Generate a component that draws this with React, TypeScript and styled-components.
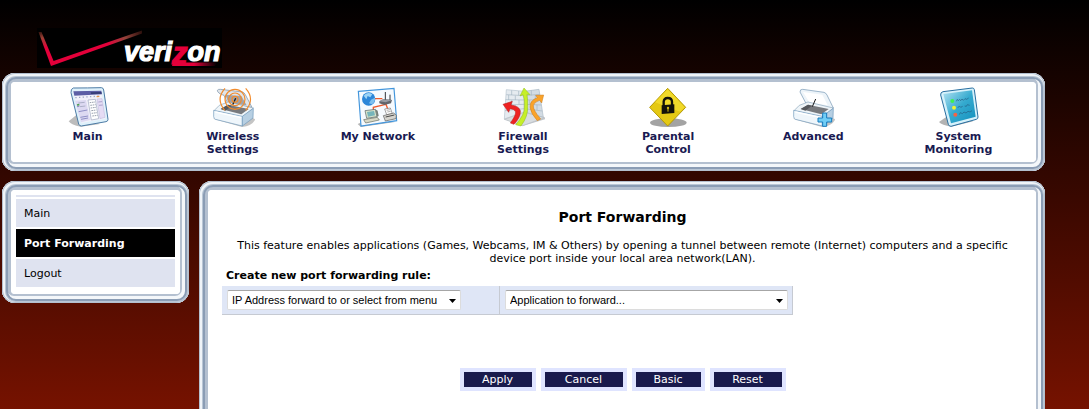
import React from 'react';
import styled, { createGlobalStyle } from 'styled-components';

const GlobalStyle = createGlobalStyle`
  *, *::before, *::after { box-sizing: border-box; }
  html { min-height: 100%; background: #000; scrollbar-width: none; }
  body {
    margin: 0;
    min-height: 100vh;
    font-family: Verdana, 'DejaVu Sans', sans-serif;
    font-size: 11px;
    line-height: 13px;
    color: #000;
    background: linear-gradient(#000 0, #3a0800 200px, #761200 409px);
  }
`;

const Page = styled.div`
  padding: 28px 44px 0 2px;
  display: flex;
  flex-direction: column;
`;

const Brand = styled.header`
  padding-left: 35px;
  height: 45px;
  svg { display: block; overflow: visible; }
`;

const Panel = styled.div`
  padding: 9px;
  border-radius: 13px;
  background: #fff;
  box-shadow:
    inset 0 0 0 1px #b3bfce,
    inset 1px 1px 0 2px #f0f4f8,
    inset 1px 1px 0 3px #b9c6d5,
    inset 1px 1px 0 5px #8b9db5,
    inset -1px -1px 0 6px #f4f7fa,
    inset 0 0 0 9px #b4c0d0;
`;

const PanelBody = styled.div`
  border-radius: 4px;
  background: #fff;
`;

const NavBody = styled(PanelBody)`
  display: grid;
  grid-template-columns: repeat(7, 1fr);
  min-height: 80px;
  padding: 5px 5px 0 4px;
`;

const NavLink = styled.a`
  display: flex;
  flex-direction: column;
  align-items: center;
  gap: 3px;
  color: #191a52;
  font-weight: bold;
  text-align: center;
  text-decoration: none;
`;

const NavLabel = styled.span`
  max-width: 90px;
`;

const Columns = styled.div`
  display: grid;
  grid-template-columns: 187px 1fr;
  gap: 10px;
  align-items: start;
  margin-top: 10px;
`;

const SideBody = styled(PanelBody)`
  display: flex;
  flex-direction: column;
  gap: 2px;
  padding: 5px 5px 7px;
`;

const SideRule = styled.div`
  height: 2px;
  background: #dfe3f0;
`;

const SideLink = styled.a<{ $active?: boolean }>`
  height: 28px;
  padding: 1px 8px 0;
  line-height: 28px;
  text-decoration: none;
  color: ${(p) => (p.$active ? '#fff' : '#000')};
  background: ${(p) => (p.$active ? '#000' : '#dfe3f0')};
  font-weight: ${(p) => (p.$active ? 'bold' : 'normal')};
`;

const MainBody = styled(PanelBody)`
  padding: 18px 13px 40px 14px;
`;

const Title = styled.h1`
  margin: 0 0 13px;
  font-size: 14px;
  line-height: 18px;
  text-align: center;
`;

const Intro = styled.p`
  margin: 0;
  text-align: center;
`;

const RuleHeading = styled.h2`
  margin: 4px 0;
  padding-left: 4px;
  font-size: 11px;
  line-height: 13px;
`;

const FieldRow = styled.div`
  display: flex;
`;

const Field = styled.div<{ $width: number }>`
  width: ${(p) => p.$width}px;
  padding: 4px;
  padding-left: 5px;
  background: #dfe6f6;
  border-right: 1px solid #c6cad2;
  border-bottom: 1px solid #c6cad2;
`;

const SelectWrap = styled.div<{ $width: number }>`
  position: relative;
  width: ${(p) => p.$width}px;
  svg {
    position: absolute;
    right: 5px;
    top: 9px;
    pointer-events: none;
  }
`;

const Select = styled.select`
  appearance: none;
  display: block;
  width: 100%;
  height: 20px;
  margin: 0;
  padding: 0 16px 0 4px;
  border: 1px solid #dcdcdc;
  border-top-color: #a6a6a6;
  border-radius: 2px;
  background: #fff;
  color: #000;
  font: 11px 'Liberation Sans', Arial, sans-serif;
`;

const Actions = styled.div`
  display: flex;
  justify-content: center;
  gap: 5px;
  margin-top: 53px;
`;

const ActionButton = styled.button<{ $width: number }>`
  width: ${(p) => p.$width}px;
  height: 23px;
  padding: 0;
  border: 4px solid #dfe4ff;
  background: #191a4c;
  color: #fff;
  font: inherit;
  line-height: 15px;
`;

function Logo() {
  return (
    <svg width="185" height="40" viewBox="37 28 185 40" role="img" aria-label="verizon">
      <defs>
        <linearGradient id="tickLeft" gradientUnits="userSpaceOnUse" x1="40" y1="31" x2="46" y2="48">
          <stop offset="0" stopColor="#2c100c" />
          <stop offset="0.4" stopColor="#9c4034" />
          <stop offset="1" stopColor="#e4003a" />
        </linearGradient>
        <linearGradient id="tickRight" gradientUnits="userSpaceOnUse" x1="142" y1="32" x2="108" y2="44">
          <stop offset="0" stopColor="#2c100c" />
          <stop offset="0.5" stopColor="#93423a" />
          <stop offset="1" stopColor="#e4003a" />
        </linearGradient>
        <linearGradient id="zTail" gradientUnits="userSpaceOnUse" x1="194" y1="0" x2="217" y2="0">
          <stop offset="0" stopColor="#e4003a" />
          <stop offset="1" stopColor="#000" />
        </linearGradient>
      </defs>
      <rect x="37" y="28" width="185" height="40" fill="#000" />
      <path d="M38.500 32L41.500 32L54 62L51 66Z" fill="url(#tickLeft)" />
      <path d="M142 30.500L52 61.500L51 66L142 33.500Z" fill="url(#tickRight)" />
      <path d="M173 62.500H217L215 66H172Z" fill="url(#zTail)" />
      <text
        x="124"
        y="61"
        fill="#fff"
        stroke="#fff"
        strokeWidth="1.2"
        fontFamily="'Liberation Sans', Arial, sans-serif"
        fontSize="27"
        fontWeight="bold"
        fontStyle="italic"
      >
        veri<tspan fill="#e4003a" stroke="#e4003a" fontSize="31" dy="3">z</tspan><tspan dy="-3">on</tspan>
      </text>
    </svg>
  );
}

function Icon({ viewBox, children }: { viewBox: string; children: React.ReactNode }) {
  return (
    <svg width="44" height="40" viewBox={viewBox} aria-hidden="true">
      {children}
    </svg>
  );
}

function MainIcon() {
  return (
    <Icon viewBox="18 21 132 120">
      <path d="M26 124L50 104L120 132L62 140Q34 136 26 124Z" fill="#bcbcbc" />
      <path d="M40 24Q84 24 124 23Q130 23 131 30L144 118Q144 124 138 125L64 138Q58 138 56 132L33 38Q32 26 40 24Z" fill="#dff1fb" stroke="#4c7ba5" strokeWidth="3" />
      <path d="M40 35L124 33L137 116L64 129Z" fill="#f2f2fa" />
      <path d="M40 34L124 32L126 43L43 47Z" fill="#5c5fa5" />
      <path d="M92 37L124 36L125 41L93 42Z" fill="#343c76" />
      <path d="M46 53L122 48" stroke="#9aa6c4" strokeWidth="4" strokeDasharray="4 7" />
      <path d="M110 50L118 49" stroke="#e79948" strokeWidth="4" />
      <path d="M45 62L78 60L90 120L63 127Z" fill="#ddd9f2" />
      <path d="M84 60L106 58L116 116L94 120Z" fill="#fff" stroke="#9ba4be" strokeWidth="2" />
      <path d="M111 57L126 56L135 112L120 116Z" fill="#e5dcf4" stroke="#b8b2d8" strokeWidth="1.500" />
      <path d="M89 68L105 66M91 76L107 74M92 84L108 82M94 92L109 90M95 100L111 98M97 108L113 106" stroke="#9aa2af" strokeWidth="3" strokeDasharray="5 2" />
      <path d="M51 80L58 79M56 95L82 90M61 112L84 108M63 118L84 114" stroke="#8f8fc6" strokeWidth="3" />
      <path d="M51 75L58 74" stroke="#4c9e50" strokeWidth="5" />
      <path d="M55 69L74 67M60 80L76 78" stroke="#9298b0" strokeWidth="2" />
      <path d="M115 66L126 65M117 76L128 75" stroke="#aaa3cc" strokeWidth="3" />
    </Icon>
  );
}

function RouterBox() {
  return (
    <>
      <path d="M38 116L126 141Q156 138 166 118L150 108Z" fill="#c4c4c4" />
      <path d="M58 76L84 66L160 84L127 111L42 92Z" fill="#eef4f8" stroke="#8aa4ba" strokeWidth="2" />
      <path d="M62 87L84 74L146 87L124 103Z" fill="#77797d" />
      <path d="M62 87L84 74L96 77L76 92Z" fill="#55585d" />
      <path d="M41 91L127 109L127 138L46 118Q42 116 41 110Z" fill="#eff6fb" stroke="#6f98bb" strokeWidth="2" />
      <path d="M127 109L160 85L159 114L127 138Z" fill="#b7cfe2" stroke="#6f98bb" strokeWidth="2" />
      <path d="M46 96L124 113" stroke="#fff" strokeWidth="4" />
    </>
  );
}

function WirelessIcon() {
  return (
    <Icon viewBox="33 21 132 120">
      <path d="M52 31Q54 27 62 28L128 36Q133 38 136 44L156 82L84 72L72 46Q52 40 52 31Z" fill="#e1e5e9" stroke="#728ca6" strokeWidth="2" />
      <path d="M76 44L124 48L140 76L86 70Z" fill="#a3a4a8" />
      <RouterBox />
      <path d="M98 74L107 55" stroke="#1a1a1a" strokeWidth="4" />
      <g fill="none" stroke="#f28b2c" strokeWidth="3.500">
        <circle cx="105" cy="58" r="9" />
        <circle cx="105" cy="58" r="19" />
        <circle cx="105" cy="58" r="30" />
        <path d="M75 25Q46 57 74 91M137 25Q166 57 137 91" />
      </g>
    </Icon>
  );
}

function AdvancedIcon() {
  return (
    <Icon viewBox="33 21 132 120">
      <path d="M80 74L60 36Q60 27 68 28L132 37Q138 39 141 45L160 84L142 88Z" fill="#edf4f9" stroke="#6f92b0" strokeWidth="2" />
      <path d="M69 36L127 44L143 76L89 68Z" fill="#fff" />
      <RouterBox />
      <path d="M97 80L107 57" stroke="#161616" strokeWidth="3" />
      <path d="M128 99H140V114H155V126H140V139H128V126H114V114H128Z" fill="#70cdf5" stroke="#177abc" strokeWidth="3" />
    </Icon>
  );
}

function NetworkIcon() {
  return (
    <Icon viewBox="33 21 132 120">
      <path d="M38 132L60 122L150 126L48 141Z" fill="#b5b5b5" />
      <path d="M40 34L147 25L155 122L48 138Z" fill="#f6fafe" stroke="#4396dc" strokeWidth="3.500" />
      <path d="M88 56H112M122 73L85 82V92M122 70L130 92" fill="none" stroke="#ee5a2b" strokeWidth="4" />
      <circle cx="71" cy="57" r="20" fill="#2c86d8" />
      <path d="M56 47Q66 34 82 43L76 52L68 48L64 58Z" fill="#9bd3f6" />
      <path d="M78 59L90 53Q91 65 81 73L72 70Z" fill="#7fc0ee" />
      <path d="M103 64L116 57L141 60L138 70L118 75L103 70Z" fill="#62666c" />
      <path d="M103 64L116 57L141 60L122 67Z" fill="#989ca3" />
      <path d="M121 59V36M135 60V44" stroke="#33363a" strokeWidth="3" />
      <path d="M60 92L91 88L96 110L65 115Z" fill="#d7e2ca" stroke="#505e61" strokeWidth="2" />
      <path d="M66 96L87 93L90 106L69 110Z" fill="#75b5ba" />
      <path d="M91 88L98 92L101 108L96 110Z" fill="#778179" />
      <path d="M56 119L97 112L103 120L62 129Z" fill="#d8d9c7" stroke="#64695e" strokeWidth="2" />
      <path d="M119 87L136 84L142 101L125 104Z" fill="#fff" stroke="#777" strokeWidth="2" />
      <path d="M115 107L146 99L154 106L153 116L121 123Z" fill="#d6d5cf" stroke="#585858" strokeWidth="2" />
      <path d="M122 111L148 105" stroke="#4a4a4a" strokeWidth="3" />
      <path d="M125 91L135 89M127 96L137 94" stroke="#888" strokeWidth="2" />
    </Icon>
  );
}

function FirewallIcon() {
  return (
    <Icon viewBox="33 21 132 120">
      <path d="M43 118L98 138L170 116L140 100Z" fill="#c2c6ca" />
      <path d="M49 29L103 34V96L43 117Z" fill="#e6ebf0" stroke="#b7c4ce" strokeWidth="2" />
      <path d="M103 34L147 28L160 112L103 96Z" fill="#d3dce4" stroke="#aab9c6" strokeWidth="2" />
      <path d="M49 44L103 47M47 59L103 60M46 75L103 73M45 92L103 86M65 31V45M86 33V46M56 45V60M76 47V60M65 60V76M87 60V73M76 75L75 90M103 47L149 43M103 60L152 59M103 73L154 75M103 86L157 93M124 31V46M136 45V60M119 60V74M141 74V90" fill="none" stroke="#a4b5c3" strokeWidth="2" />
      <path d="M43 118L103 97L163 113L98 137Z" fill="#d9dde0" stroke="#b7bec4" strokeWidth="2" />
      <path d="M39 73L67 64L63 75Q87 78 91 92Q93 110 72 133L61 129Q80 103 76 94Q72 87 60 86L56 97Z" fill="#ee2222" stroke="#b01c1c" strokeWidth="1.500" />
      <path d="M161 45L137 46L142 53Q119 61 120 82Q123 102 142 122L152 117Q129 90 130 77Q132 66 149 61L155 69Z" fill="#faa32a" stroke="#c97a1c" strokeWidth="1.500" />
      <path d="M102 24L120 44L111 43Q114 63 113 80Q115 108 93 138L77 134Q105 103 103 82Q105 59 99 44L90 48Z" fill="#c6ef28" stroke="#8fba1c" strokeWidth="1.500" />
    </Icon>
  );
}

function ParentalIcon() {
  return (
    <Icon viewBox="30 21 132 120">
      <ellipse cx="97" cy="128" rx="55" ry="13" fill="#a3a3a3" />
      <path d="M95 25L149 82L95 138L41 82Z" fill="#e5c914" stroke="#b49904" strokeWidth="3" />
      <path d="M95 28L146 82L132 95L57 67Z" fill="#f1d92a" />
      <path d="M83 78V65Q84 54 95 54Q108 54 108 66V76" fill="none" stroke="#15130a" strokeWidth="7" />
      <path d="M77 76L115 73V99L77 102Z" fill="#15130a" />
      <circle cx="96" cy="84" r="3.500" fill="#d7bc15" />
      <path d="M96 85V95" stroke="#d7bc15" strokeWidth="3" />
    </Icon>
  );
}

function MonitorIcon() {
  return (
    <Icon viewBox="48 51 132 120">
      <defs>
        <linearGradient id="screen" x1="0" y1="0" x2="1" y2="1">
          <stop offset="0" stopColor="#b2e2f2" />
          <stop offset="0.5" stopColor="#35aacf" />
          <stop offset="1" stopColor="#128fbd" />
        </linearGradient>
      </defs>
      <path d="M57 156L82 139L160 154L94 170Q65 166 57 156Z" fill="#b3b3b3" />
      <path d="M69 65L157 54Q162 54 163 59L174 141Q174 147 169 148L93 169Q87 169 85 163L62 75Q61 67 69 65Z" fill="#d5f1fb" stroke="#286fa1" strokeWidth="3" />
      <path d="M70 72L156 61L167 140L93 160Z" fill="url(#screen)" />
      <circle cx="97" cy="93" r="6" fill="#3df052" />
      <circle cx="102" cy="113" r="6" fill="#f0f432" />
      <circle cx="106" cy="134" r="6" fill="#f36445" />
      <path d="M109 94L112 88L115 92L119 88L122 92L126 87L130 91L135 86L140 88L146 84M113 114L118 108L122 112L128 109M134 108L139 109L142 104L149 106M118 134L121 128L127 131L132 126L138 129L144 124L150 126L156 122" fill="none" stroke="#245e85" strokeWidth="2" />
    </Icon>
  );
}

const navItems = [
  { label: 'Main', icon: <MainIcon /> },
  { label: 'Wireless Settings', icon: <WirelessIcon /> },
  { label: 'My Network', icon: <NetworkIcon /> },
  { label: 'Firewall Settings', icon: <FirewallIcon /> },
  { label: 'Parental Control', icon: <ParentalIcon /> },
  { label: 'Advanced', icon: <AdvancedIcon /> },
  { label: 'System Monitoring', icon: <MonitorIcon /> },
];

const actions = [
  { label: 'Apply', width: 76 },
  { label: 'Cancel', width: 86 },
  { label: 'Basic', width: 73 },
  { label: 'Reset', width: 76 },
];

function DropDown({ label, width }: { label: string; width: number }) {
  return (
    <SelectWrap $width={width}>
      <Select aria-label={label}>
        <option>{label}</option>
      </Select>
      <svg width="7" height="4" viewBox="0 0 7 4" aria-hidden="true">
        <path d="M0 0H7L3.500 4Z" fill="#000" />
      </svg>
    </SelectWrap>
  );
}

export default function App() {
  return (
    <>
      <GlobalStyle />
      <Page>
        <Brand>
          <Logo />
        </Brand>
        <Panel as="nav">
          <NavBody>
            {navItems.map((item) => (
              <NavLink href="#" key={item.label}>
                {item.icon}
                <NavLabel>{item.label}</NavLabel>
              </NavLink>
            ))}
          </NavBody>
        </Panel>
        <Columns>
          <Panel as="aside">
            <SideBody>
              <SideRule />
              <SideLink href="#">Main</SideLink>
              <SideLink href="#" $active>
                Port Forwarding
              </SideLink>
              <SideLink href="#">Logout</SideLink>
            </SideBody>
          </Panel>
          <Panel as="main">
            <MainBody>
              <Title>Port Forwarding</Title>
              <Intro>
                This feature enables applications (Games, Webcams, IM &amp; Others) by opening a tunnel between remote
                (Internet) computers and a specific device port inside your local area network(LAN).
              </Intro>
              <RuleHeading>Create new port forwarding rule:</RuleHeading>
              <FieldRow>
                <Field $width={278}>
                  <DropDown label="IP Address forward to or select from menu" width={234} />
                </Field>
                <Field $width={293}>
                  <DropDown label="Application to forward..." width={283} />
                </Field>
              </FieldRow>
              <Actions>
                {actions.map((a) => (
                  <ActionButton type="button" key={a.label} $width={a.width}>
                    {a.label}
                  </ActionButton>
                ))}
              </Actions>
            </MainBody>
          </Panel>
        </Columns>
      </Page>
    </>
  );
}
